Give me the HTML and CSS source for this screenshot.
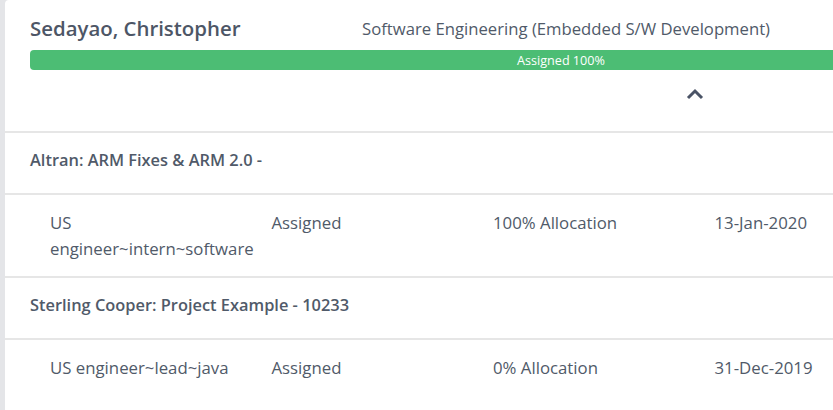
FILE: index.html
```html
<!DOCTYPE html>
<html>
<head>
<meta charset="utf-8">
<link rel="stylesheet" href="styles.css">
</head>
<body>
<div class="card">
  <div class="head">
    <div class="head-top">
      <div class="name">Sedayao, Christopher</div>
      <div class="role">Software Engineering (Embedded S/W Development)</div>
    </div>
    <div class="bar"><span>Assigned 100%</span></div>
    <div class="toggle">
      <svg width="18" height="12" viewBox="0 0 18 12"><path d="M2 10 L9 3 L16 10" fill="none" stroke="#4a5366" stroke-width="3"/></svg>
    </div>
  </div>
  <div class="group">Altran: ARM Fixes &amp; ARM 2.0 -</div>
  <div class="row">
    <div class="cell">US engineer~intern~software</div>
    <div class="cell">Assigned</div>
    <div class="cell">100% Allocation</div>
    <div class="cell">13-Jan-2020</div>
  </div>
  <div class="group">Sterling Cooper: Project Example - 10233</div>
  <div class="row last">
    <div class="cell">US engineer~lead~java</div>
    <div class="cell">Assigned</div>
    <div class="cell">0% Allocation</div>
    <div class="cell">31-Dec-2019</div>
  </div>
</div>
</body>
</html>
```
FILE: styles.css
```css
html, body {
  margin: 0;
  padding: 0;
  background: #e4e5e8;
  overflow: hidden;
}
body {
  font-family: "Open Sans", "Noto Sans", sans-serif;
  color: #505a69;
}
.card {
  margin-left: 5px;
  min-height: 420px;
  background: #fff;
  border-top-left-radius: 4px;
  overflow: hidden;
}
.head {
  padding: 12px 0 0 25px;
  height: 119px;
  border-bottom: 2px solid #e6e6e6;
}
.head-top {
  display: flex;
  align-items: center;
  height: 32px;
}
.name {
  flex: none;
  width: 332px;
  font-size: 20.4px;
  font-weight: 600;
  color: #4d5666;
}
.role {
  flex: none;
  font-size: 16.7px;
}
.bar {
  margin-top: 6px;
  width: 1062px;
  height: 20px;
  border-radius: 4px;
  background: #4cbd74;
  display: flex;
  align-items: center;
  justify-content: center;
}
.bar span {
  color: #fff;
  font-size: 12.6px;
}
.toggle {
  margin: 18px 0 0 656px;
  width: 18px;
  height: 12px;
}
.toggle svg { display: block; }
.group {
  padding: 17px 0 23px 25px;
  line-height: 20px;
  font-size: 16.4px;
  font-weight: 600;
  border-bottom: 2px solid #e6e6e6;
}
.row {
  display: grid;
  grid-template-columns: repeat(4, 221.5px);
  padding: 15px 0 14px 45px;
  border-bottom: 2px solid #e6e6e6;
  font-size: 16.8px;
  line-height: 26px;
}
.row.last {
  border-bottom: none;
}
.cell {
  padding-right: 10px;
}
```
